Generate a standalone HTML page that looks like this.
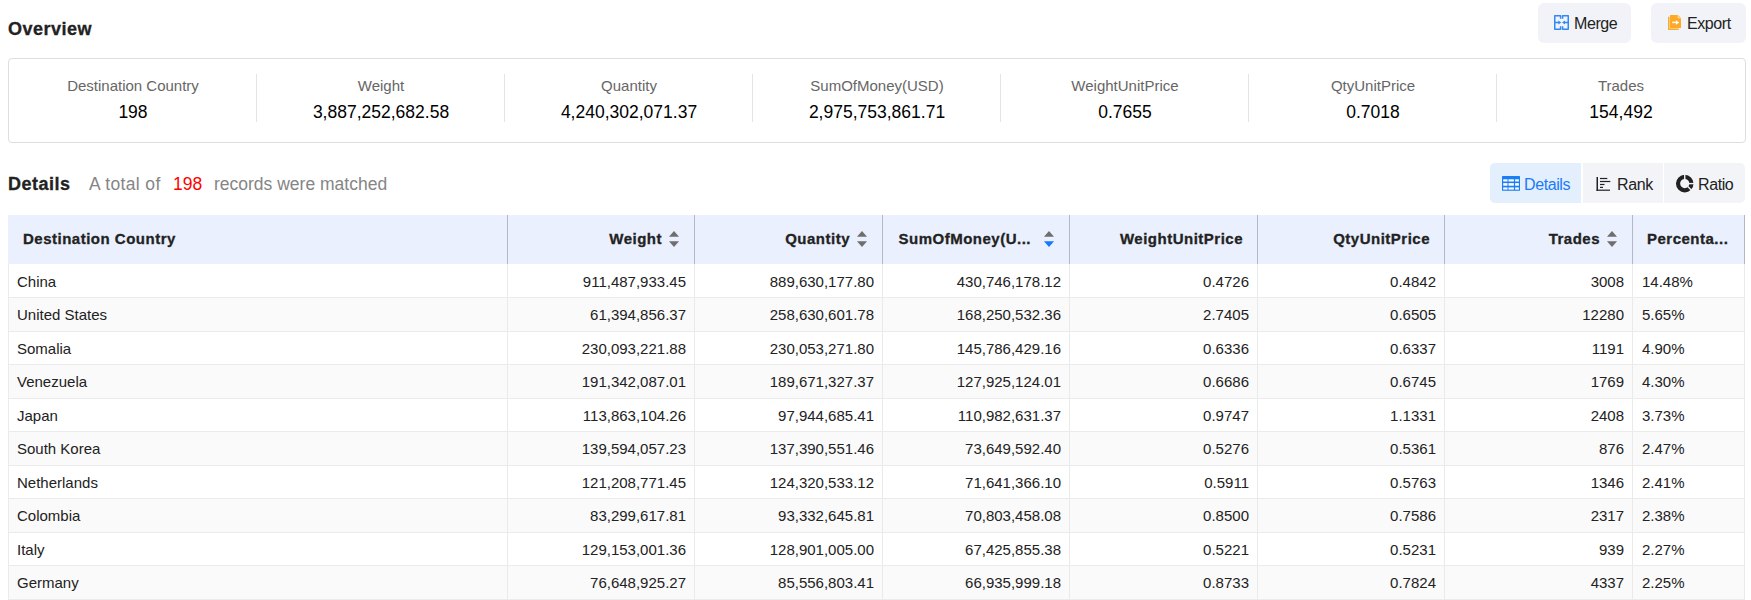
<!DOCTYPE html>
<html><head><meta charset="utf-8">
<style>
*{box-sizing:border-box;margin:0;padding:0}
html,body{width:1751px;height:600px;overflow:hidden;background:#fff;font-family:"Liberation Sans",sans-serif;color:#222}
.abs{position:absolute}
.title{position:absolute;left:8px;font-weight:bold;font-size:18px;color:#222;line-height:20px;white-space:nowrap;letter-spacing:0.5px;-webkit-text-stroke:0.3px #222}
.btn{position:absolute;top:3px;height:40px;background:#f1f3f8;border-radius:6px;font-size:16px;letter-spacing:-0.4px;color:#222;line-height:41px;white-space:nowrap}
.btn svg{position:absolute}
.card{position:absolute;left:8px;top:58px;width:1738px;height:85px;border:1px solid #dedede;border-radius:4px}
.cell{position:absolute;top:0;width:248px;height:83px;text-align:center}
.cell .lab{position:absolute;left:0;right:0;top:18px;font-size:15px;line-height:18px;color:#666;white-space:nowrap}
.cell .val{position:absolute;left:0;right:0;top:42px;font-size:17.5px;line-height:22px;color:#000;white-space:nowrap}
.div{position:absolute;top:15px;width:1px;height:48px;background:#e4e4e4}
.sub{position:absolute;top:174px;font-size:17.5px;color:#858585;line-height:20px;white-space:nowrap}
.grp{position:absolute;top:163px;height:40px;background:#f3f4f8;font-size:16px;letter-spacing:-0.4px;line-height:44px;white-space:nowrap;color:#222}
table{position:absolute;left:8px;top:215px;border-collapse:collapse;table-layout:fixed;width:1736px}
th{height:49px;background:#eaf0fd;font-weight:bold;font-size:15px;letter-spacing:0.5px;color:#222;-webkit-text-stroke:0.3px #222;border-right:1px solid #b4b8c6;padding:0 14px 2px 14px;text-align:right;white-space:nowrap;position:relative}
th:first-child{text-align:left;border-left:1px solid #eaf0fd}
td{font-size:15px;color:#222;border-right:1px solid #eaeaea;border-bottom:1px solid #ebebeb;padding:2px 8px 0 9px;text-align:right;white-space:nowrap}
td:first-child{text-align:left;border-left:1px solid #ebebeb;padding-left:8px}
td:last-child{text-align:left}
tr.o td{background:#fafafa;padding-top:0}
.sort{display:inline-block;width:10px;height:16px;margin-left:7px;margin-right:1px;vertical-align:-3px}
</style></head><body>
<div class="title" style="top:19px">Overview</div>

<div class="btn" style="left:1538px;width:93px">
<svg style="left:16px;top:12px" width="16" height="16" viewBox="0 0 16 16"><g fill="none" stroke="#2f8af5" stroke-width="1.5" stroke-linejoin="round"><path d="M6.6 3.8V0.75H0.75V14.25H6.6V11.2"/><path d="M8.6 3.8V0.75H14.25V14.25H8.6V11.2"/><path d="M0.75 7.4H5M14.25 7.4H10.3"/></g><g fill="#2f8af5"><path d="M4.3 5.4L7.3 7.4L4.3 9.4Z"/><path d="M11 5.4L8 7.4L11 9.4Z"/></g></svg>
<span style="position:absolute;left:36px">Merge</span></div>

<div class="btn" style="left:1651px;width:95px">
<svg style="left:17px;top:12px" width="15" height="16" viewBox="0 0 15 16"><g fill="#ffa928"><path d="M0 1.7H1.5V13.5H10.7V15H0Z"/><path d="M2 0H10L13 3V13H2Z"/></g><path d="M10.2 0.3V2.8H12.7" fill="none" stroke="#fff" stroke-width="0.8" opacity=".8"/><path d="M4.2 7.4H8.8" stroke="#fff" stroke-width="1.5"/><path d="M8 5.2L11.2 7.4L8 9.7Z" fill="#fff"/></svg>
<span style="position:absolute;left:36px">Export</span></div>

<div class="card">
 <div class="cell" style="left:0"><div class="lab">Destination Country</div><div class="val">198</div></div>
 <div class="div" style="left:247px"></div>
 <div class="cell" style="left:248px"><div class="lab">Weight</div><div class="val">3,887,252,682.58</div></div>
 <div class="div" style="left:495px"></div>
 <div class="cell" style="left:496px"><div class="lab">Quantity</div><div class="val">4,240,302,071.37</div></div>
 <div class="div" style="left:743px"></div>
 <div class="cell" style="left:744px"><div class="lab">SumOfMoney(USD)</div><div class="val">2,975,753,861.71</div></div>
 <div class="div" style="left:991px"></div>
 <div class="cell" style="left:992px"><div class="lab">WeightUnitPrice</div><div class="val">0.7655</div></div>
 <div class="div" style="left:1239px"></div>
 <div class="cell" style="left:1240px"><div class="lab">QtyUnitPrice</div><div class="val">0.7018</div></div>
 <div class="div" style="left:1487px"></div>
 <div class="cell" style="left:1488px"><div class="lab">Trades</div><div class="val">154,492</div></div>
</div>

<div class="title" style="top:174px">Details</div>
<div class="sub" style="left:89px;letter-spacing:0.35px">A total of</div>
<div class="sub" style="left:173px;color:#ff0000">198</div>
<div class="sub" style="left:214px">records were matched</div>

<div class="grp" style="left:1490px;width:255px;border-radius:5px">
 <div class="abs" style="left:0;top:0;width:91px;height:40px;background:#e4effd;border-radius:5px 0 0 5px;color:#1a7af8">
  <svg style="position:absolute;left:12px;top:13px" width="18" height="15" viewBox="0 0 18 15"><rect x="0" y="0" width="18" height="14.75" rx="0.6" fill="#1a7ef5"/><g fill="#fff"><rect x="1.2" y="3.3" width="4.3" height="2.2"/><rect x="6.5" y="3.3" width="5.4" height="2.2"/><rect x="13.1" y="3.3" width="3.8" height="2.2"/><rect x="1.2" y="7.1" width="4.3" height="2.6"/><rect x="6.5" y="7.1" width="5.4" height="2.6"/><rect x="13.1" y="7.1" width="3.8" height="2.6"/><rect x="1.2" y="11.4" width="4.3" height="2.2"/><rect x="6.5" y="11.4" width="5.4" height="2.2"/><rect x="13.1" y="11.4" width="3.8" height="2.2"/></g></svg>
  <span style="position:absolute;left:34px">Details</span></div>
 <div class="abs" style="left:91px;top:0;width:2px;height:40px;background:#fff"></div>
 <div class="abs" style="left:93px;top:0;width:80px;height:40px">
  <svg style="position:absolute;left:13px;top:14px" width="15" height="15" viewBox="0 0 15 15"><g fill="#222"><rect x="0.5" y="0" width="1.5" height="13.8"/><rect x="0.5" y="12.6" width="13.5" height="1.2"/><rect x="4" y="0.9" width="7.3" height="1.2"/><rect x="4" y="3.9" width="10.3" height="1.2"/><rect x="4" y="6.9" width="4.5" height="1.2"/><rect x="4" y="9.8" width="3" height="1.2"/></g></svg>
  <span style="position:absolute;left:34px">Rank</span></div>
 <div class="abs" style="left:173px;top:0;width:1px;height:40px;background:#fff"></div>
 <div class="abs" style="left:174px;top:0;width:81px;height:40px">
  <svg style="position:absolute;left:11px;top:11px" width="20" height="20" viewBox="0 0 20 20"><circle cx="9.75" cy="9.6" r="6.7" fill="none" stroke="#222" stroke-width="4.2"/><g stroke="#f3f4f8" stroke-width="1.4"><path d="M9.75 9.6V0"/><path d="M9.75 9.6H20"/><path d="M9.75 9.6L18.24 18.09"/></g></svg>
  <span style="position:absolute;left:34px">Ratio</span></div>
</div>

<table>
<colgroup><col style="width:499px"><col style="width:187px"><col style="width:188px"><col style="width:187px"><col style="width:188px"><col style="width:187px"><col style="width:188px"><col style="width:112px"></colgroup>
<thead><tr>
<th>Destination Country</th>
<th>Weight<svg class="sort" viewBox="0 0 10 16"><path d="M0 5.8L5 0L10 5.8Z" fill="#6e6e6e"/><path d="M0 10.2H10L5 16Z" fill="#6e6e6e"/></svg></th>
<th>Quantity<svg class="sort" viewBox="0 0 10 16"><path d="M0 5.8L5 0L10 5.8Z" fill="#6e6e6e"/><path d="M0 10.2H10L5 16Z" fill="#6e6e6e"/></svg></th>
<th>SumOfMoney(U...<svg class="sort" style="margin-left:13px" viewBox="0 0 10 16"><path d="M0 5.8L5 0L10 5.8Z" fill="#6e6e6e"/><path d="M0 10.2H10L5 16Z" fill="#1677ff"/></svg></th>
<th>WeightUnitPrice</th>
<th>QtyUnitPrice</th>
<th>Trades<svg class="sort" viewBox="0 0 10 16"><path d="M0 5.8L5 0L10 5.8Z" fill="#6e6e6e"/><path d="M0 10.2H10L5 16Z" fill="#6e6e6e"/></svg></th>
<th style="text-align:left">Percenta...</th>
</tr></thead>
<tbody>
<tr style="height:33px"><td>China</td><td>911,487,933.45</td><td>889,630,177.80</td><td>430,746,178.12</td><td>0.4726</td><td>0.4842</td><td>3008</td><td>14.48%</td></tr>
<tr class="o" style="height:34px"><td>United States</td><td>61,394,856.37</td><td>258,630,601.78</td><td>168,250,532.36</td><td>2.7405</td><td>0.6505</td><td>12280</td><td>5.65%</td></tr>
<tr style="height:33px"><td>Somalia</td><td>230,093,221.88</td><td>230,053,271.80</td><td>145,786,429.16</td><td>0.6336</td><td>0.6337</td><td>1191</td><td>4.90%</td></tr>
<tr class="o" style="height:34px"><td>Venezuela</td><td>191,342,087.01</td><td>189,671,327.37</td><td>127,925,124.01</td><td>0.6686</td><td>0.6745</td><td>1769</td><td>4.30%</td></tr>
<tr style="height:33px"><td>Japan</td><td>113,863,104.26</td><td>97,944,685.41</td><td>110,982,631.37</td><td>0.9747</td><td>1.1331</td><td>2408</td><td>3.73%</td></tr>
<tr class="o" style="height:34px"><td>South Korea</td><td>139,594,057.23</td><td>137,390,551.46</td><td>73,649,592.40</td><td>0.5276</td><td>0.5361</td><td>876</td><td>2.47%</td></tr>
<tr style="height:33px"><td>Netherlands</td><td>121,208,771.45</td><td>124,320,533.12</td><td>71,641,366.10</td><td>0.5911</td><td>0.5763</td><td>1346</td><td>2.41%</td></tr>
<tr class="o" style="height:34px"><td>Colombia</td><td>83,299,617.81</td><td>93,332,645.81</td><td>70,803,458.08</td><td>0.8500</td><td>0.7586</td><td>2317</td><td>2.38%</td></tr>
<tr style="height:33px"><td>Italy</td><td>129,153,001.36</td><td>128,901,005.00</td><td>67,425,855.38</td><td>0.5221</td><td>0.5231</td><td>939</td><td>2.27%</td></tr>
<tr class="o" style="height:34px"><td>Germany</td><td>76,648,925.27</td><td>85,556,803.41</td><td>66,935,999.18</td><td>0.8733</td><td>0.7824</td><td>4337</td><td>2.25%</td></tr>
</tbody></table>
</body></html>
